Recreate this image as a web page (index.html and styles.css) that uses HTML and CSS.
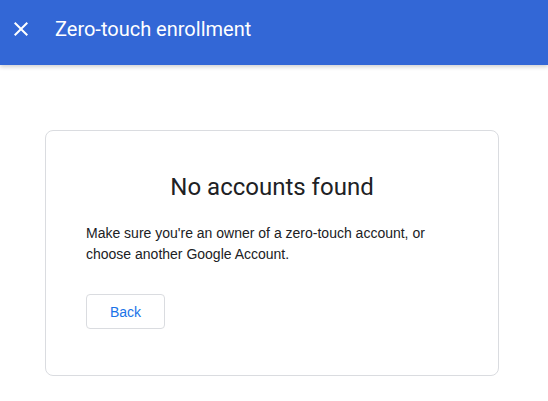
FILE: index.html
```html
<!DOCTYPE html>
<html>
<head>
<meta charset="utf-8">
<link rel="stylesheet" href="styles.css">
</head>
<body>
<header class="appbar">
  <button class="close" aria-label="Close">
    <svg viewBox="0 0 24 24" width="24" height="24"><path fill="#fff" d="M19 6.41L17.59 5 12 10.59 6.41 5 5 6.41 10.59 12 5 17.59 6.41 19 12 13.41 17.59 19 19 17.59 13.41 12z"/></svg>
  </button>
  <h1 class="title">Zero-touch enrollment</h1>
</header>
<main class="content">
  <section class="card">
    <h2 class="card-title">No accounts found</h2>
    <p class="card-text">Make sure you're an owner of a zero-touch account, or choose another Google Account.</p>
    <button class="btn">Back</button>
  </section>
</main>
</body>
</html>
```
FILE: styles.css
```css
html, body {
  margin: 0;
  padding: 0;
  background: #fff;
}
body {
  font-family: "Liberation Sans", Arial, sans-serif;
  color: #202124;
}
.appbar {
  height: 65px;
  box-sizing: border-box;
  padding-bottom: 7px;
  background: #3367d6;
  display: flex;
  align-items: center;
  box-shadow: 0 2px 4px rgba(0,0,0,0.18);
  position: relative;
}
.close {
  width: 24px;
  height: 24px;
  margin-left: 9px;
  padding: 0;
  border: 0;
  background: none;
  display: flex;
}
.title {
  margin: 0 0 0 22px;
  font-family: Roboto, sans-serif;
  font-weight: 400;
  font-size: 20px;
  color: #fff;
}
.content {
  padding: 65px 49px 0 45px;
}
.card {
  border: 1px solid #dadce0;
  border-radius: 8px;
  padding: 0 40px;
  box-sizing: border-box;
  height: 246px;
}
.card-title {
  margin: 40px 0 0;
  text-align: center;
  font-family: Roboto, sans-serif;
  font-weight: 400;
  font-size: 24px;
  line-height: 32px;
  color: #202124;
}
.card-text {
  margin: 20px 0 0;
  font-size: 14px;
  line-height: 21px;
  color: #202124;
}
.btn {
  margin-top: 29px;
  width: 79px;
  height: 35px;
  border: 1px solid #dadce0;
  border-radius: 4px;
  background: #fff;
  color: #1a73e8;
  font-family: "Liberation Sans", Arial, sans-serif;
  font-size: 14px;
  font-weight: 500;
}
```
